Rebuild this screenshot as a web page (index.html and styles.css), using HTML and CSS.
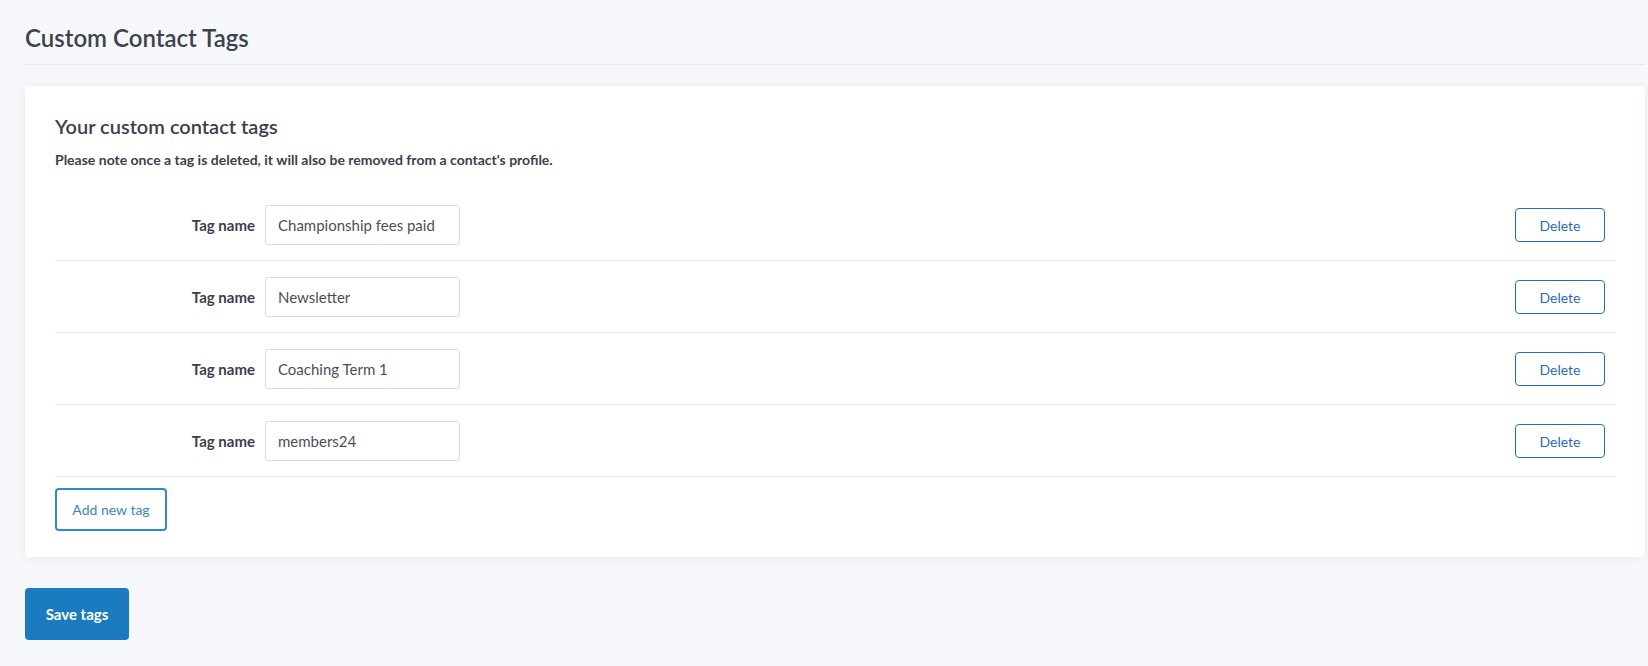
FILE: index.html
```html
<!DOCTYPE html>
<html lang="en">
<head>
    <meta charset="UTF-8">
    <meta name="viewport" content="width=device-width, initial-scale=1.0">
    <title>Custom Contact Tags</title>
    <link rel="stylesheet" href="styles.css">
</head>
<body>
    <div class="page">
        <h1 class="page-title">Custom Contact Tags</h1>

        <div class="card">
            <h2 class="card-title">Your custom contact tags</h2>
            <p class="note">Please note once a tag is deleted, it will also be removed from a contact's profile.</p>

            <div class="tag-list">
                <div class="tag-row">
                    <label class="tag-label">Tag name</label>
                    <input type="text" class="tag-input" value="Championship fees paid">
                    <button class="delete-btn">Delete</button>
                </div>
                <div class="tag-row">
                    <label class="tag-label">Tag name</label>
                    <input type="text" class="tag-input" value="Newsletter">
                    <button class="delete-btn">Delete</button>
                </div>
                <div class="tag-row">
                    <label class="tag-label">Tag name</label>
                    <input type="text" class="tag-input" value="Coaching Term 1">
                    <button class="delete-btn">Delete</button>
                </div>
                <div class="tag-row">
                    <label class="tag-label">Tag name</label>
                    <input type="text" class="tag-input" value="members24">
                    <button class="delete-btn">Delete</button>
                </div>
            </div>

            <button class="add-btn">Add new tag</button>
        </div>

        <button class="save-btn">Save tags</button>
    </div>
</body>
</html>
```

FILE: styles.css
```css
body {
    font-family: Lato, "Open Sans", sans-serif;
    margin: 0;
    padding: 0;
    background-color: #f6f7fb;
    color: #3b414c;
}

.page {
    padding: 24px 3px 26px 25px;
}

.page-title {
    font-size: 24px;
    font-weight: 600;
    line-height: 1.2;
    margin: 0;
    padding-bottom: 11px;
    border-bottom: 1px solid #e6e8ec;
    color: #3d434e;
}

.card {
    margin-top: 21px;
    background: #fff;
    border-radius: 4px;
    box-shadow: 0 1px 8px rgba(0, 0, 0, 0.06);
    padding: 28px 30px 26px 30px;
}

.card-title {
    font-size: 20px;
    font-weight: 600;
    line-height: 1.2;
    margin: 0;
    color: #3b414c;
}

.note {
    font-size: 14px;
    font-weight: 700;
    line-height: 1.4;
    margin: 12px 0 0 0;
    color: #3b414c;
}

.tag-list {
    margin-top: 20px;
}

.tag-row {
    display: flex;
    align-items: center;
    padding: 16px 10px 15px 0;
    border-bottom: 1px solid #e8e9ec;
}

.tag-label {
    width: 200px;
    text-align: right;
    font-size: 15px;
    font-weight: 700;
    color: #3b414c;
}

.tag-input {
    margin-left: 10px;
    width: 195px;
    height: 40px;
    box-sizing: border-box;
    padding: 0 12px;
    font-family: Lato, sans-serif;
    font-size: 15px;
    color: #4a505b;
    border: 1px solid #d9dbe0;
    border-radius: 3px;
    outline: none;
}

.delete-btn {
    margin-left: auto;
    width: 90px;
    height: 34px;
    background: #fff;
    border: 1px solid #1d6fb8;
    border-radius: 4px;
    color: #1f6fbf;
    font-family: Lato, sans-serif;
    font-size: 14px;
    cursor: pointer;
}

.add-btn {
    margin-top: 11px;
    width: 112px;
    height: 43px;
    background: #fff;
    border: 2px solid #2e8bc9;
    border-radius: 4px;
    color: #3d85c6;
    font-family: Lato, sans-serif;
    font-size: 14px;
    cursor: pointer;
}

.save-btn {
    margin-top: 31px;
    width: 104px;
    height: 52px;
    background: #1b7bc0;
    border: none;
    border-radius: 4px;
    color: #fff;
    font-family: Lato, sans-serif;
    font-size: 15px;
    font-weight: 700;
    cursor: pointer;
}
```
